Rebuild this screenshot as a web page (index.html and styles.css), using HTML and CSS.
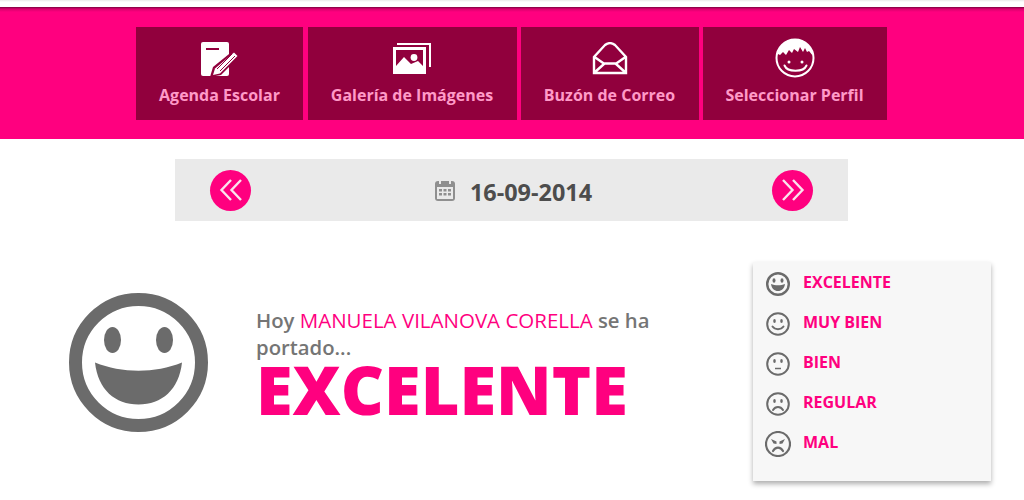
FILE: index.html
```html
<!DOCTYPE html>
<html lang="es">
<head>
<meta charset="utf-8">
<title>Agenda Escolar</title>
<link rel="stylesheet" href="styles.css">
</head>
<body>
<div class="topstrip"></div>
<header class="header">
  <nav class="nav">
    <a class="tile tile-agenda">
      <svg class="tile-icon" width="40" height="36" viewBox="0 0 40 36"><path fill="#fff" d="M3 1h24a2 2 0 0 1 2 2v30a2 2 0 0 1-2 2H3a2 2 0 0 1-2-2V3a2 2 0 0 1 2-2z"/><rect x="6" y="7" width="13" height="2" fill="#91003d"/><path fill="#91003d" d="M34 9l6 6-19 19-11 2 3-10z"/><path fill="#fff" d="M34 11.500l3.500 3.500-17.500 17.500-7 1.500 2-6.500z"/><path stroke="#91003d" stroke-width="1" d="M17 28l15-15M20 30l15-15"/></svg>
      <span>Agenda Escolar</span>
    </a>
    <a class="tile tile-galeria">
      <svg class="tile-icon" width="40" height="36" viewBox="0 0 40 36"><path fill="#fff" d="M5 1h34v24h-2V3H5z"/><path fill="#fff" d="M1 5h33v27H1z"/><path fill="#91003d" d="M4 8h27v16l-5-5-7 3-7-7-8 9z"/><circle cx="22" cy="15.500" r="3.400" fill="#fff"/></svg>
      <span>Galería de Imágenes</span>
    </a>
    <a class="tile tile-buzon">
      <svg class="tile-icon" width="36" height="34" viewBox="0 0 36 34"><path fill="none" stroke="#fff" stroke-width="2.400" d="M2 31V15L13 3c3-2.500 7-2.500 10 0l11 12v16zM2.500 15l10 7M33.500 15l-10 7M2.500 30.500l10-9h11l10 9"/></svg>
      <span>Buzón de Correo</span>
    </a>
    <a class="tile tile-perfil">
      <svg class="tile-icon" width="40" height="40" viewBox="0 0 40 40"><circle cx="20" cy="20" r="18.500" fill="#91003d" stroke="#fff" stroke-width="2"/><path fill="#fff" d="M2 18C3 8 11 1 20 1s17 7 18 17l-4-5-2 1-2-4-2 4-3-5-2 5-4-3-2 4-3-3-3 5-3-3-3 3-2-1z"/><circle cx="14" cy="24" r="1.500" fill="#fff"/><circle cx="27" cy="24" r="1.500" fill="#fff"/><path fill="none" stroke="#fff" stroke-width="2" stroke-linecap="round" d="M9.500 27.500c3 7 19 7 22 0"/></svg>
      <span>Seleccionar Perfil</span>
    </a>
  </nav>
</header>

<section class="datebar">
  <a class="arrow"><svg width="24" height="22" viewBox="0 0 24 22"><path fill="none" stroke="#fbe3ee" stroke-width="2.400" d="M12 1L2.500 11l9.500 10M22 1l-9.500 10 9.500 10"/></svg></a>
  <div class="date">
    <svg width="20" height="20" viewBox="0 0 20 20"><rect width="20" height="20" rx="3" fill="#8f8f8f"/><rect x="2" y="6" width="16" height="12" fill="#eaeaea"/><g fill="#8f8f8f"><rect x="4" y="8" width="3" height="2.500"/><rect x="8.500" y="8" width="3" height="2.500"/><rect x="13" y="8" width="3" height="2.500"/><rect x="4" y="12" width="3" height="2.500"/><rect x="8.500" y="12" width="3" height="2.500"/><rect x="13" y="12" width="3" height="2.500"/></g><rect x="4" width="2" height="3" fill="#eaeaea"/><rect x="14" width="2" height="3" fill="#eaeaea"/></svg>
    <span>16-09-2014</span>
  </div>
  <a class="arrow"><svg width="24" height="22" viewBox="0 0 24 22"><path fill="none" stroke="#fbe3ee" stroke-width="2.400" d="M2 1l9.500 10L2 21M12 1l9.500 10L12 21"/></svg></a>
</section>

<main class="main">
  <div class="result">
    <svg class="bigface" width="139" height="139" viewBox="0 0 139 139"><circle cx="69.500" cy="69.500" r="63" fill="#fff" stroke="#6b6b6b" stroke-width="13"/><ellipse cx="43.500" cy="47" rx="8.500" ry="13" fill="#6b6b6b"/><ellipse cx="95.500" cy="47" rx="8.500" ry="13" fill="#6b6b6b"/><path fill="#6b6b6b" d="M26 69.500c27 11 60 11 87 0-3 27-20 42-43.500 42S29 96.500 26 69.500z"/></svg>
    <div class="result-text">
      <p class="greeting">Hoy <span class="name">MANUELA VILANOVA CORELLA</span> se ha portado...</p>
      <p class="grade">EXCELENTE</p>
    </div>
  </div>
  <aside class="legend">
    <div class="legend-row">
      <svg width="26" height="26" viewBox="0 0 26 26"><circle cx="13" cy="13" r="10.800" fill="none" stroke="#6b6b6b" stroke-width="2.400"/><ellipse cx="9" cy="9.500" rx="1.500" ry="2.200" fill="#6b6b6b"/><ellipse cx="17" cy="9.500" rx="1.500" ry="2.200" fill="#6b6b6b"/><path fill="#6b6b6b" d="M6 13c4 1.700 10 1.700 14 0-.5 4.500-3.500 7-7 7s-6.500-2.500-7-7z"/></svg>
      <span>EXCELENTE</span>
    </div>
    <div class="legend-row">
      <svg width="26" height="26" viewBox="0 0 26 26"><circle cx="13" cy="13" r="10.800" fill="none" stroke="#6b6b6b" stroke-width="2"/><ellipse cx="9.500" cy="10" rx="1.300" ry="1.900" fill="#6b6b6b"/><ellipse cx="16.500" cy="10" rx="1.300" ry="1.900" fill="#6b6b6b"/><path fill="none" stroke="#6b6b6b" stroke-width="2" stroke-linecap="round" d="M7.500 15.500c2.500 3.500 8.500 3.500 11 0"/></svg>
      <span>MUY BIEN</span>
    </div>
    <div class="legend-row">
      <svg width="26" height="26" viewBox="0 0 26 26"><circle cx="13" cy="13" r="10.800" fill="none" stroke="#6b6b6b" stroke-width="2"/><ellipse cx="9.500" cy="10" rx="1.300" ry="1.900" fill="#6b6b6b"/><ellipse cx="16.500" cy="10" rx="1.300" ry="1.900" fill="#6b6b6b"/><path stroke="#6b6b6b" stroke-width="1.500" d="M10 17.500h6"/></svg>
      <span>BIEN</span>
    </div>
    <div class="legend-row">
      <svg width="26" height="26" viewBox="0 0 26 26"><circle cx="13" cy="13" r="10.800" fill="none" stroke="#6b6b6b" stroke-width="2"/><ellipse cx="9.500" cy="10" rx="1.300" ry="1.900" fill="#6b6b6b"/><ellipse cx="16.500" cy="10" rx="1.300" ry="1.900" fill="#6b6b6b"/><path fill="none" stroke="#6b6b6b" stroke-width="2" stroke-linecap="round" d="M8 19c2.500-4 7.500-4 10 0"/></svg>
      <span>REGULAR</span>
    </div>
    <div class="legend-row">
      <svg width="26" height="26" viewBox="0 0 26 26"><circle cx="13" cy="13" r="12" fill="none" stroke="#6b6b6b" stroke-width="2.200"/><path fill="#6b6b6b" d="M6 8l5.500 2.500v2.500l-3-.5zM20 8l-5.500 2.500v2.500l3-.5z"/><path fill="none" stroke="#6b6b6b" stroke-width="2.200" stroke-linecap="round" d="M8 20c2.500-4.500 7.500-4.500 10 0"/></svg>
      <span>MAL</span>
    </div>
  </aside>
</main>
</body>
</html>
```
FILE: styles.css
```css
* { box-sizing: border-box; }
html, body { margin: 0; padding: 0; }
body {
  font-family: "Open Sans", "Liberation Sans", sans-serif;
  background: #fff;
  width: 1024px;
  height: 500px;
  overflow: hidden;
}
.topstrip {
  height: 7px;
  background: linear-gradient(#e9e9e9 0, #fff 2px, #fff 100%);
}
.header {
  height: 132px;
  background: linear-gradient(#7d0040 0, #d8006c 2px, #ff007f 5px);
  padding: 20px 0 0 136px;
}
.nav { display: flex; height: 93px; }
.tile {
  display: flex;
  flex-direction: column;
  align-items: center;
  height: 93px;
  background: #91003d;
  color: #ff9ac8;
  font-size: 16px;
  font-weight: 700;
  line-height: 22px;
  position: relative;
}
.tile span { position: absolute; top: 57px; white-space: nowrap; margin-left: -1px; }
.tile-agenda { width: 167px; margin-right: 5px; }
.tile-agenda span { margin-left: 0; }
.tile-galeria { width: 209px; margin-right: 4px; }
.tile-buzon { width: 178px; margin-right: 4px; }
.tile-perfil { width: 184px; }
.tile-icon { margin-top: 15px; }
.tile-agenda .tile-icon { margin-top: 14px; }
.tile-galeria .tile-icon { margin-top: 15px; margin-left: -1px; }
.tile-perfil .tile-icon { margin-top: 11px; }
.datebar {
  margin: 20px 0 0 175px;
  width: 673px;
  height: 62px;
  background: #eaeaea;
  display: flex;
  align-items: center;
  justify-content: space-between;
  padding: 0 35px;
}
.arrow {
  width: 41px;
  height: 41px;
  border-radius: 50%;
  background: #ff007f;
  display: flex;
  align-items: center;
  justify-content: center;
}
.date {
  display: flex;
  align-items: center;
  gap: 15px;
  color: #4d4d4d;
  font-size: 23.400px;
  font-weight: 700;
  margin: 2px 0 0 4px;
}
.date span { margin-top: 2px; }
.main {
  display: flex;
  justify-content: space-between;
  align-items: flex-start;
  padding: 41px 33px 0 69px;
}
.result { display: flex; margin-top: 31px; }
.result-text { width: 410px; margin-left: 48px; margin-top: 14px; }
.greeting {
  margin: 0;
  font-size: 20.300px;
  font-weight: 600;
  line-height: 27px;
  color: #757575;
}
.name { color: #ff007f; font-weight: 400; font-size: 20.500px; }
.grade {
  margin: 0;
  font-size: 66.700px;
  font-weight: 800;
  line-height: 58px;
  color: #ff007f;
}
.legend {
  width: 238px;
  height: 219px;
  background: #f7f7f7;
  box-shadow: 0 3px 5px rgba(0,0,0,.32);
  padding: 0 0 0 12px;
}
.legend-row {
  display: flex;
  align-items: center;
  height: 40px;
  color: #ff007f;
  font-size: 16px;
  font-weight: 700;
}
.legend-row svg { width: 26px; height: 26px; margin-right: 12px; flex: none; margin-top: 3px; }
.legend-row span { margin-top: -1px; }
```
